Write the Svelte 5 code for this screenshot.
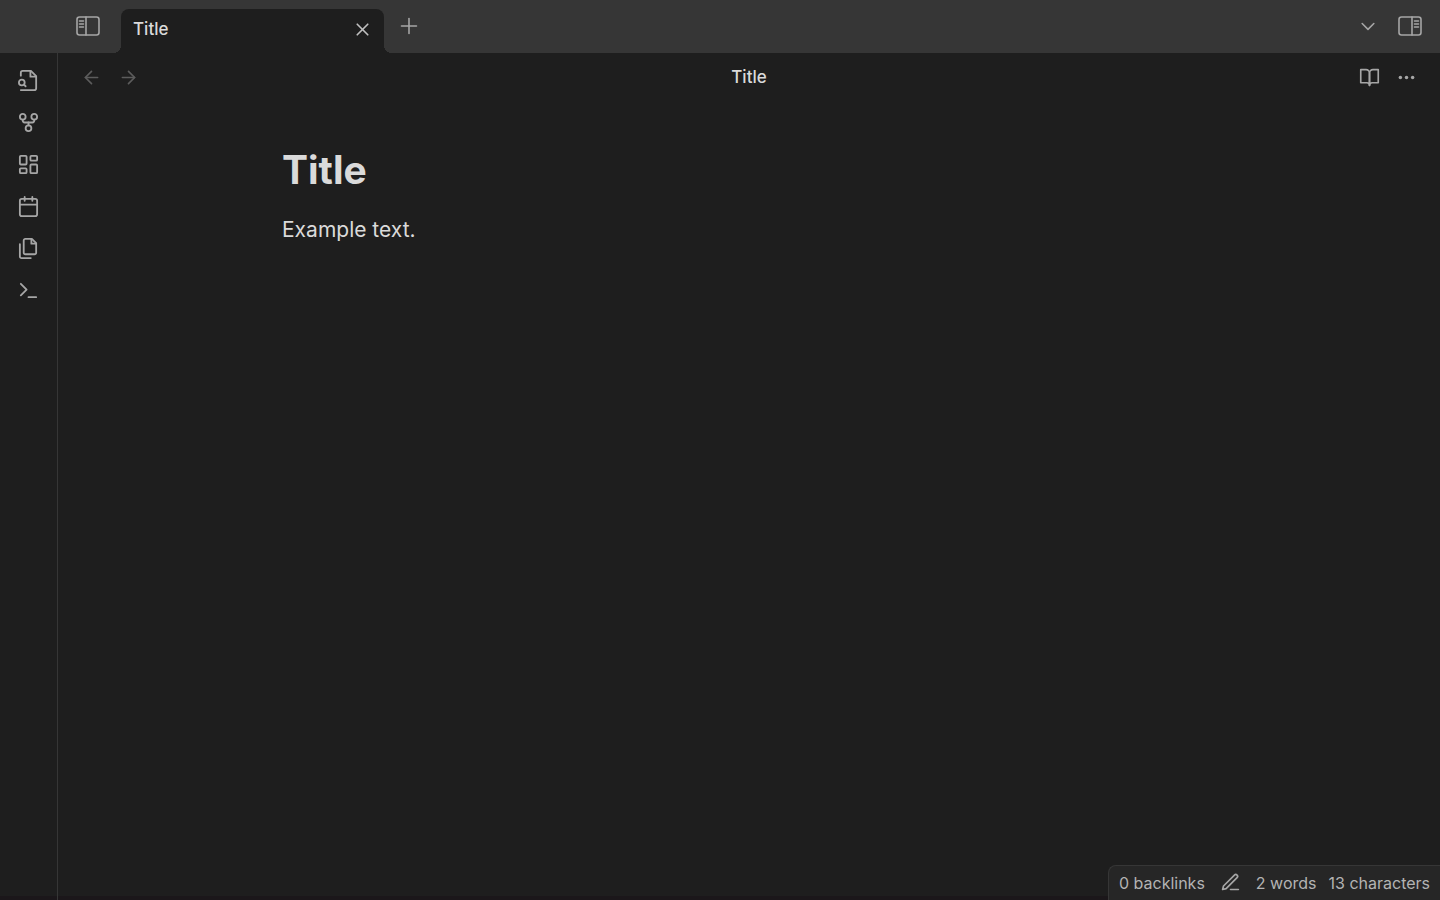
<script>
	let title = $state('Title');
	let body = $state('Example text.');

	const ribbon = [
		{
			label: 'Open quick switcher',
			paths: [
				'M4 7V4a2 2 0 0 1 2-2h8.500L20 7.500V20a2 2 0 0 1-2 2H4',
				'M14 2v6h6',
				'M5 11a3 3 0 1 0 0 6a3 3 0 1 0 0-6z',
				'm9 18-1.500-1.500'
			]
		},
		{
			label: 'Open graph view',
			paths: [
				'M12 15a3 3 0 1 0 0 6a3 3 0 1 0 0-6z',
				'M6 3a3 3 0 1 0 0 6a3 3 0 1 0 0-6z',
				'M18 3a3 3 0 1 0 0 6a3 3 0 1 0 0-6z',
				'M18 9v1a2 2 0 0 1-2 2H8a2 2 0 0 1-2-2V9',
				'M12 12v3'
			]
		},
		{
			label: 'Create new canvas',
			paths: [
				'M4 3h5a1 1 0 0 1 1 1v7a1 1 0 0 1-1 1H4a1 1 0 0 1-1-1V4a1 1 0 0 1 1-1z',
				'M15 3h5a1 1 0 0 1 1 1v3a1 1 0 0 1-1 1h-5a1 1 0 0 1-1-1V4a1 1 0 0 1 1-1z',
				'M15 12h5a1 1 0 0 1 1 1v7a1 1 0 0 1-1 1h-5a1 1 0 0 1-1-1v-7a1 1 0 0 1 1-1z',
				'M4 16h5a1 1 0 0 1 1 1v3a1 1 0 0 1-1 1H4a1 1 0 0 1-1-1v-3a1 1 0 0 1 1-1z'
			]
		},
		{
			label: "Open today's daily note",
			paths: [
				'M5 4h14a2 2 0 0 1 2 2v14a2 2 0 0 1-2 2H5a2 2 0 0 1-2-2V6a2 2 0 0 1 2-2z',
				'M16 2v4',
				'M8 2v4',
				'M3 10h18'
			]
		},
		{
			label: 'Insert template',
			paths: [
				'M15.500 2H8.600c-.4 0-.8.2-1.100.5-.3.3-.5.7-.5 1.100v12.800c0 .4.2.8.5 1.100.3.3.7.5 1.100.5h9.800c.4 0 .8-.2 1.100-.5.3-.3.5-.7.5-1.100V6.500L15.500 2z',
				'M3 7.600v12.800c0 .4.2.8.5 1.100.3.3.7.5 1.100.5h9.800',
				'M15 2v5h5'
			]
		},
		{ label: 'Open command palette', paths: ['m4 17 6-6-6-6', 'M12 19h8'] }
	];
</script>

{#snippet icon(paths, size)}
	<svg class="icon {size}" viewBox="0 0 24 24" aria-hidden="true">
		{#each paths as d}
			<path {d} />
		{/each}
	</svg>
{/snippet}

<div class="app">
	<header class="titlebar">
		<button class="btn sidebar-left" aria-label="Toggle left sidebar">
			<svg class="icon large" viewBox="0 0 24 24" aria-hidden="true">
				<rect x="1" y="3" width="22" height="18" rx="2.5" />
				<path d="M10 3v18M3.500 7h4M3.500 10h4M3.500 13h4" />
			</svg>
		</button>
		<div class="tab">
			<span class="tab-title">{title}</span>
			<button class="btn close" aria-label="Close tab">
				{@render icon(['M18 6 6 18', 'm6 6 12 12'], 'medium')}
			</button>
		</div>
		<button class="btn new-tab" aria-label="New tab">
			{@render icon(['M12 3v18', 'M3 12h18'], 'small')}
		</button>
		<div class="titlebar-end">
			<button class="btn" aria-label="Tab list">
				{@render icon(['m5 9 7 7 7-7'], 'small')}
			</button>
			<button class="btn" aria-label="Toggle right sidebar">
				<svg class="icon large" viewBox="0 0 24 24" aria-hidden="true">
					<rect x="1" y="3" width="22" height="18" rx="2.5" />
					<path d="M14 3v18M16.500 7h4M16.500 10h4M16.500 13h4" />
				</svg>
			</button>
		</div>
	</header>

	<div class="workspace">
		<nav class="ribbon" aria-label="Ribbon">
			{#each ribbon as item}
				<button class="btn" aria-label={item.label}>
					{@render icon(item.paths, 'ribbon-icon')}
				</button>
			{/each}
		</nav>

		<main class="pane">
			<div class="view-header">
				<div class="nav">
					<button class="btn" aria-label="Navigate back" disabled>
						{@render icon(['m12 19-7-7 7-7', 'M19 12H5'], 'medium')}
					</button>
					<button class="btn" aria-label="Navigate forward" disabled>
						{@render icon(['M5 12h14', 'm12 5 7 7-7 7'], 'medium')}
					</button>
				</div>
				<span class="view-title">{title}</span>
				<div class="actions">
					<button class="btn" aria-label="Switch to reading view">
						{@render icon(
							['M2 3h6a4 4 0 0 1 4 4v14a3 3 0 0 0-3-3H2z', 'M22 3h-6a4 4 0 0 0-4 4v14a3 3 0 0 1 3-3h7z'],
							'medium'
						)}
					</button>
					<button class="btn" aria-label="More options">
						<svg class="icon medium dots" viewBox="0 0 24 24" aria-hidden="true">
							<circle cx="5" cy="12" r="2" />
							<circle cx="12" cy="12" r="2" />
							<circle cx="19" cy="12" r="2" />
						</svg>
					</button>
				</div>
			</div>

			<article class="note">
				<h1>{title}</h1>
				<p>{body}</p>
			</article>
		</main>
	</div>

	<footer class="status">
		<span>0 backlinks</span>
		<button class="btn edit" aria-label="Editing mode">
			{@render icon(['M12 20h9', 'M16.500 3.500a2.120 2.120 0 0 1 3 3L7 19l-4 1 1-4Z'], 'medium')}
		</button>
		<span>2 words</span>
		<span>13 characters</span>
	</footer>
</div>

<style>
	:global(body) {
		margin: 0;
		background: #1e1e1e;
	}
	.app {
		position: relative;
		display: flex;
		flex-direction: column;
		min-height: 100vh;
		background: linear-gradient(to top, #1b171a 4px, #1e1e1e 4px);
		color: #dadada;
		font-family: Inter, 'Liberation Sans', sans-serif;
		font-size: 16px;
	}

	.btn {
		display: flex;
		align-items: center;
		justify-content: center;
		padding: 0;
		border: 0;
		background: none;
		color: #a6a6a6;
		cursor: pointer;
	}
	.btn:disabled {
		color: #5c5c5c;
		cursor: default;
	}
	.icon {
		display: block;
		fill: none;
		stroke: currentColor;
		stroke-width: 1.9;
		stroke-linecap: round;
		stroke-linejoin: round;
	}
	.small {
		width: 20px;
		height: 20px;
	}
	.medium {
		width: 21px;
		height: 21px;
	}
	.ribbon-icon {
		width: 23px;
		height: 23px;
	}
	.large {
		width: 24px;
		height: 24px;
		stroke-width: 1.6;
	}
	.dots {
		fill: currentColor;
		stroke: none;
	}

	.titlebar {
		display: flex;
		align-items: center;
		height: 53px;
		padding: 0 18px 1px 76px;
		box-sizing: border-box;
		background: #363636;
	}
	.tab {
		position: relative;
		display: flex;
		align-items: center;
		justify-content: space-between;
		align-self: flex-end;
		width: 263px;
		height: 44px;
		margin: 0 0 -1px 21px;
		padding: 0 11px 4px 12px;
		box-sizing: border-box;
		border-radius: 8px 8px 0 0;
		background: #1e1e1e;
	}
	.tab::before,
	.tab::after {
		content: '';
		position: absolute;
		bottom: 0;
		width: 8px;
		height: 8px;
	}
	.tab::before {
		right: 100%;
		background: radial-gradient(circle at 0 0, transparent 8px, #1e1e1e 8px);
	}
	.tab::after {
		left: 100%;
		background: radial-gradient(circle at 100% 0, transparent 8px, #1e1e1e 8px);
	}
	.tab-title,
	.view-title {
		font-size: 17px;
		font-weight: 500;
		line-height: 20px;
	}
	.close {
		color: #c0c0c0;
	}
	.new-tab {
		margin-left: 15px;
	}
	.titlebar-end {
		display: flex;
		align-items: center;
		gap: 20px;
		margin-left: auto;
	}

	.workspace {
		display: flex;
		flex: 1;
	}
	.ribbon {
		display: flex;
		flex-direction: column;
		gap: 19px;
		width: 57px;
		padding-top: 16px;
		border-right: 1px solid #363636;
	}
	.pane {
		flex: 1;
		min-width: 0;
	}
	.view-header {
		display: grid;
		grid-template-columns: 1fr auto 1fr;
		align-items: center;
		height: 48px;
		padding: 0 23px;
	}
	.nav,
	.actions {
		display: flex;
		gap: 16px;
	}
	.actions {
		justify-content: flex-end;
	}

	.note {
		max-width: 934px;
		margin: 0 auto;
		padding: 44px 24px 60px;
	}
	.note h1 {
		margin: 0;
		font-size: 39px;
		font-weight: 700;
		line-height: 50px;
	}
	.note p {
		margin: 18px 0 0;
		font-size: 21px;
		line-height: 34px;
	}

	.status {
		position: absolute;
		right: 0;
		bottom: 0;
		display: flex;
		align-items: center;
		gap: 12px;
		height: 35px;
		padding: 0 10px 1px;
		box-sizing: border-box;
		border: 1px solid #363636;
		border-width: 1px 0 0 1px;
		border-radius: 8px 0 0 0;
		background: #262626;
		color: #b3b3b3;
		line-height: 20px;
	}
	.edit {
		margin: 0 3px;
	}
</style>
